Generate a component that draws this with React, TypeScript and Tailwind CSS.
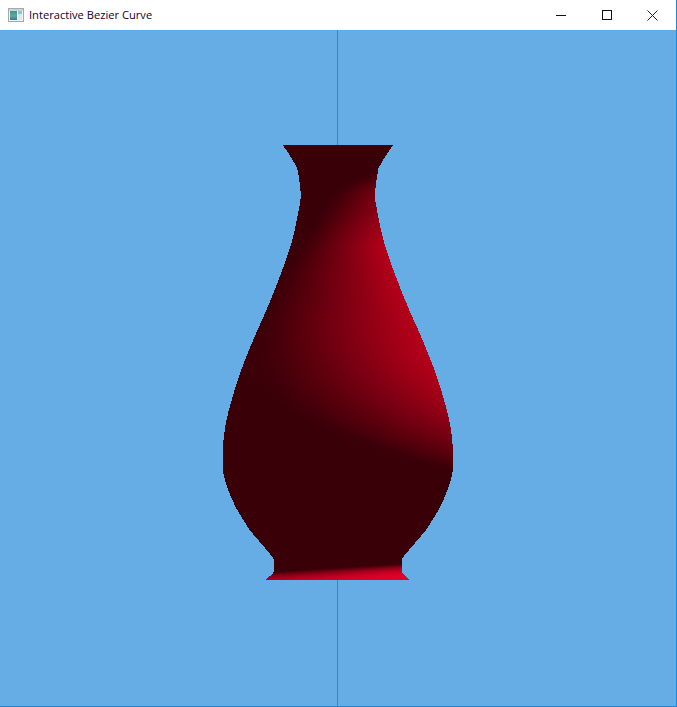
import React from "react";

const FLARE: [number, number][] = [[145, 55], [150, 51.5], [156, 47.5], [162, 44], [168, 40.5]];
const OUTLINE: [number, number][] = [
  [168, 40.5], [180, 38.5], [196, 37], [210, 39], [230, 43],
  [240, 45.5], [250, 48.5], [273, 56.5], [307, 70], [340, 84.5], [373, 97.5], [407, 108], [427, 112.5], [447, 114.7],
  [470, 114.7], [487, 110.5], [507, 102], [523, 92.5], [530, 88], [540, 79.5], [550, 71], [558, 64.5], [560, 64], [567, 63.5], [572, 64],
];
const FOOT: [number, number][] = [[572, 64], [573, 64.5], [580, 72]];

// Catmull-Rom through the measured radii, so the silhouette is a curve rather than a polygon
function smooth(table: [number, number][], v: number) {
  if (v <= table[0][0]) return table[0][1];
  const last = table.length - 1;
  if (v >= table[last][0]) return table[last][1];
  let i = 1;
  while (v > table[i][0]) i++;
  const [x1, y1] = table[i - 1];
  const [x2, y2] = table[i];
  const p = table[Math.max(0, i - 2)];
  const q = table[Math.min(last, i + 1)];
  const h = x2 - x1;
  const m1 = ((y2 - p[1]) / (x2 - p[0])) * h;
  const m2 = ((q[1] - y1) / (q[0] - x1)) * h;
  const t = (v - x1) / h;
  const t2 = t * t;
  const t3 = t2 * t;
  return (2 * t3 - 3 * t2 + 1) * y1 + (t3 - 2 * t2 + t) * m1 + (-2 * t3 + 3 * t2) * y2 + (t3 - t2) * m2;
}

function linear(table: [number, number][], v: number) {
  if (v <= table[0][0]) return table[0][1];
  for (let i = 1; i < table.length; i++) {
    if (v <= table[i][0]) {
      const [a, b] = table[i - 1];
      const [c, d] = table[i];
      return b + ((d - b) * (v - a)) / (c - a);
    }
  }
  return table[table.length - 1][1];
}

function radius(y: number) {
  if (y < 168) return linear(FLARE, y);
  if (y >= 572) return linear(FOOT, y);
  return smooth(OUTLINE, y);
}

const CREASE_A: [number, number][] = [
  [165, 385], [173, 370], [193, 337], [215, 322], [240, 306], [273, 286], [320, 264], [360, 248], [420, 225],
];
const CREASE_B: [number, number][] = [
  [220, 360], [260, 385], [300, 415], [340, 435], [400, 456], [455, 471],
];

const clamp = (v: number) => Math.max(0, Math.min(1, v));

function shade(x: number, y: number) {
  const right = 338 + radius(y);
  let red = 58;
  let blue = 8;
  if (y > 165 && y < 480) {
    const xa = linear(CREASE_A, y);
    const t = clamp((x - xa) / Math.max(30, right - xa));
    const w = clamp((y - 150) / 95);
    const v = clamp((linear(CREASE_B, x) - y) / 115);
    const l = t * w * (v * (2 - v));
    red = 58 + (182 - 58) * l;
    blue = 8 + 18 * l;
  }
  if (y >= 562) {
    const yc = 572 - ((x - 273) / 127) * 8;
    const t = clamp((y - yc) / 13);
    const k = 0.8 + 0.2 * clamp((x - 270) / 125);
    const l = t * (2 - t) * k;
    red = 58 + (226 - 58) * l;
    blue = 8 + 32 * l;
  }
  return `rgb(${Math.round(red)},0,${Math.round(blue)})`;
}

const ROWS = Array.from({ length: 435 }, (_, i) => {
  const y = 145 + i;
  const r = radius(y + 0.5);
  const left = Math.round(337.7 - r);
  const right = Math.round(338 + r);
  const stops: { o: number; c: string }[] = [];
  const n = Math.max(2, Math.ceil((right - left) / 10));
  for (let s = 0; s <= n; s++) {
    const o = s / n;
    stops.push({ o, c: shade(left + o * (right - left), y + 0.5) });
  }
  return { y, left, right, stops };
});

function Vase() {
  return (
    <svg width="676" height="677" viewBox="0 30 676 677" shapeRendering="crispEdges" className="block">
      <line x1="337.5" y1="30" x2="337.5" y2="707" stroke="#1fa855" strokeWidth="1" />
      <defs>
        {ROWS.map((row) => (
          <linearGradient key={row.y} id={`row-${row.y}`} gradientUnits="userSpaceOnUse" x1={row.left} x2={row.right} y1="0" y2="0">
            {row.stops.map((s) => (
              <stop key={s.o} offset={s.o} stopColor={s.c} />
            ))}
          </linearGradient>
        ))}
      </defs>
      {ROWS.map((row) => (
        <rect key={row.y} x={row.left} y={row.y} width={row.right - row.left} height="1" fill={`url(#row-${row.y})`} />
      ))}
    </svg>
  );
}

function AppIcon() {
  return (
    <svg width="16" height="14" viewBox="0 0 16 14" shapeRendering="crispEdges" className="block">
      <rect x="0.5" y="0.5" width="15" height="13" fill="#f4f4f4" stroke="#a8a8a8" />
      <rect x="1" y="1" width="14" height="2" fill="#c9d3dc" />
      <defs>
        <linearGradient id="icon-a" x1="0" x2="0" y1="0" y2="1">
          <stop offset="0" stopColor="#3f8fa0" />
          <stop offset="0.55" stopColor="#5fae8a" />
          <stop offset="1" stopColor="#3d6fb0" />
        </linearGradient>
      </defs>
      <rect x="2" y="3" width="7" height="9" fill="url(#icon-a)" />
      <rect x="10" y="3" width="4" height="3" fill="#8fc3d8" />
      <rect x="10" y="6" width="4" height="6" fill="#dfe7e2" />
    </svg>
  );
}

function WindowButtons() {
  return (
    <div className="flex h-full">
      <div className="flex h-full w-[46px] items-center justify-center">
        <svg width="10" height="10" viewBox="0 0 10 10" shapeRendering="crispEdges">
          <rect x="0" y="5" width="10" height="1" fill="#111111" />
        </svg>
      </div>
      <div className="flex h-full w-[45px] items-center justify-center">
        <svg width="10" height="10" viewBox="0 0 10 10" shapeRendering="crispEdges">
          <rect x="0.5" y="0.5" width="9" height="9" fill="none" stroke="#111111" />
        </svg>
      </div>
      <div className="flex h-full w-[47px] items-center justify-center pr-px">
        <svg width="11" height="11" viewBox="0 0 11 11">
          <path d="M0.5 0.5 L10.5 10.5 M10.5 0.5 L0.5 10.5" stroke="#222222" strokeWidth="1" fill="none" />
        </svg>
      </div>
    </div>
  );
}

export default function App() {
  return (
    <div className="flex h-[707px] w-[677px] flex-col overflow-hidden border-r border-b border-[#1a8ad8] bg-white">
      <div className="flex h-[30px] shrink-0 items-center justify-between bg-white">
        <div className="flex items-center pl-[8px]">
          <AppIcon />
          <span className="ml-[5px] font-['Open_Sans','Noto_Sans',sans-serif] text-[11.15px] leading-none text-[#15001f]">
            Interactive Bezier Curve
          </span>
        </div>
        <WindowButtons />
      </div>
      <div className="min-h-0 flex-1 bg-[#66ade5]">
        <Vase />
      </div>
    </div>
  );
}
